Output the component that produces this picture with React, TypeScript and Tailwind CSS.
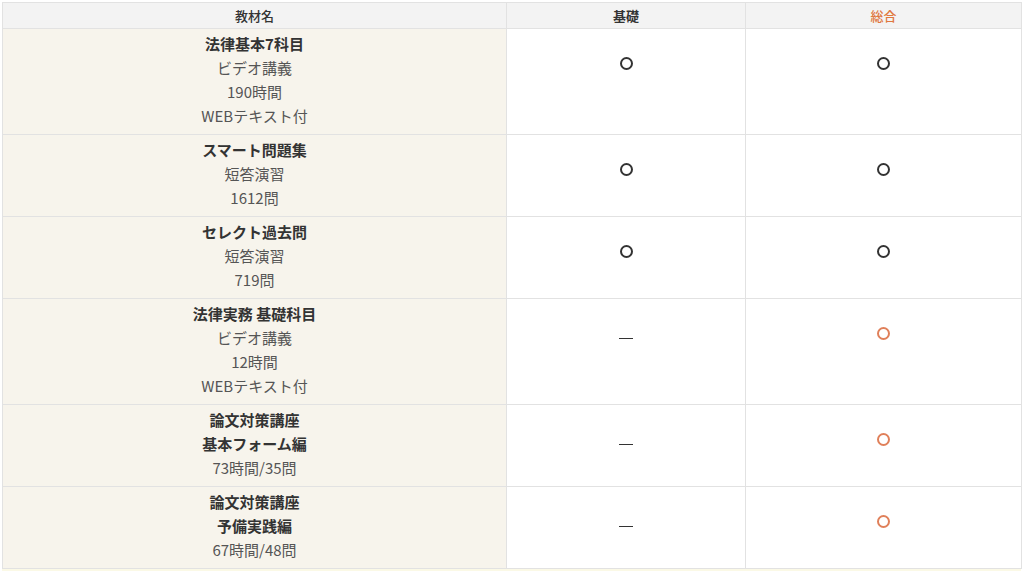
import React from 'react'

type Row = {
    lines: { text: string; bold?: boolean }[]
    basic: 'o' | '-'
    total: 'o' | '-'
    totalOrange?: boolean
}

const rows: Row[] = [
    {
        lines: [{ text: '法律基本7科目', bold: true }, { text: 'ビデオ講義' }, { text: '190時間' }, { text: 'WEBテキスト付' }],
        basic: 'o',
        total: 'o',
    },
    {
        lines: [{ text: 'スマート問題集', bold: true }, { text: '短答演習' }, { text: '1612問' }],
        basic: 'o',
        total: 'o',
    },
    {
        lines: [{ text: 'セレクト過去問', bold: true }, { text: '短答演習' }, { text: '719問' }],
        basic: 'o',
        total: 'o',
    },
    {
        lines: [{ text: '法律実務 基礎科目', bold: true }, { text: 'ビデオ講義' }, { text: '12時間' }, { text: 'WEBテキスト付' }],
        basic: '-',
        total: 'o',
        totalOrange: true,
    },
    {
        lines: [{ text: '論文対策講座', bold: true }, { text: '基本フォーム編', bold: true }, { text: '73時間/35問' }],
        basic: '-',
        total: 'o',
        totalOrange: true,
    },
    {
        lines: [{ text: '論文対策講座', bold: true }, { text: '予備実践編', bold: true }, { text: '67時間/48問' }],
        basic: '-',
        total: 'o',
        totalOrange: true,
    },
]

const Mark = ({ kind, orange }: { kind: 'o' | '-'; orange?: boolean }) => {
    if (kind === '-') {
        return (
            <div className="flex justify-center pt-[39px]">
                <div className="w-[14px] h-px bg-[#333]" />
            </div>
        )
    }
    return (
        <div className="flex justify-center pt-[28px]">
            <div
                className={
                    orange
                        ? 'w-[13px] h-[13px] rounded-full border-2 border-[#e0805a]'
                        : 'w-[13px] h-[13px] rounded-full border-2 border-[#333]'
                }
            />
        </div>
    )
}

export default function App() {
    return (
        <div className="w-[1024px] h-[571px] overflow-hidden bg-white pt-[2px] pl-[2px] font-['Meiryo','Noto_Sans_CJK_JP',sans-serif]">
            <table className="w-[1019px] border-collapse table-fixed">
                <colgroup>
                    <col className="w-[504px]" />
                    <col className="w-[239px]" />
                    <col className="w-[276px]" />
                </colgroup>
                <thead>
                    <tr className="h-[26px] bg-[#f3f3f3] text-[13px]">
                        <th className="border border-[#e2e2e2] font-medium text-[#333]">教材名</th>
                        <th className="border border-[#e2e2e2] font-bold text-[#333]">基礎</th>
                        <th className="border border-[#e2e2e2] font-medium text-[#e0783f]">総合</th>
                    </tr>
                </thead>
                <tbody>
                    {rows.map((row, i) => (
                        <tr key={i}>
                            <td className="border border-[#e2e2e2] bg-[#f7f4ec] pt-[3px] pb-[6px] text-center text-[15px] leading-[24px]">
                                {row.lines.map((l, j) => (
                                    <div key={j} className={l.bold ? 'font-bold text-[#333]' : 'text-[#555]'}>
                                        {l.text}
                                    </div>
                                ))}
                            </td>
                            <td className="border border-[#e2e2e2] align-top">
                                <Mark kind={row.basic} />
                            </td>
                            <td className="border border-[#e2e2e2] align-top">
                                <Mark kind={row.total} orange={row.totalOrange} />
                            </td>
                        </tr>
                    ))}
                </tbody>
            </table>
            <div className="w-[1019px] h-[3px] bg-[#fbf9e6]" />
        </div>
    )
}
